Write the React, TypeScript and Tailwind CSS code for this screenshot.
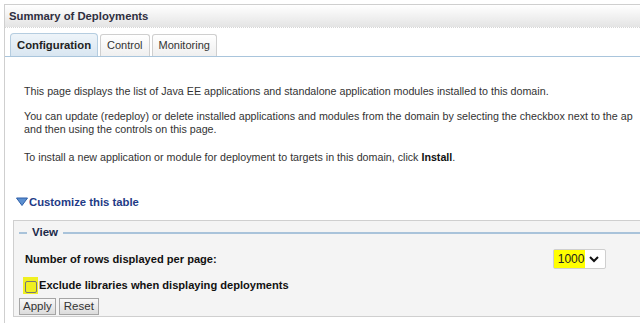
import React from 'react';

const App = () => {
  return (
    <div className="w-[640px] h-[323px] bg-white overflow-hidden font-['Liberation_Sans',sans-serif] text-[#333]">
      <div className="mt-[4px] ml-[4px] h-[319px] border-l border-t border-[#cfcfcf]">
        {/* header */}
        <div className="h-[23px] bg-gradient-to-b from-white to-[#e4e4e4] border-b border-dotted border-[#d6d6d6] flex items-center pl-[4px]">
          <span className="text-[11.3px] font-bold text-[#2f2f3f]">Summary of Deployments</span>
        </div>

        {/* tabs */}
        <div className="flex items-end gap-[2px] pl-[5px] pt-[5px] border-b border-[#a9c5dc]">
          <div className="h-[23px] px-[6px] flex items-center rounded-t-[4px] border border-b-0 border-[#b5cde0] bg-gradient-to-b from-[#eef4f9] to-[#d9e6f1] text-[11.3px] font-bold text-[#222]">
            Configuration
          </div>
          <div className="h-[22px] px-[6px] flex items-center rounded-t-[3px] border border-b-0 border-[#cfcfcf] bg-gradient-to-b from-white to-[#efefef] text-[11px] text-[#333]">
            Control
          </div>
          <div className="h-[22px] px-[6px] flex items-center rounded-t-[3px] border border-b-0 border-[#cfcfcf] bg-gradient-to-b from-white to-[#efefef] text-[11px] text-[#333]">
            Monitoring
          </div>
        </div>

        {/* description */}
        <div className="pl-[19px] pt-[28px] text-[10.7px] leading-[13px] text-[#333] whitespace-nowrap">
          <p>This page displays the list of Java EE applications and standalone application modules installed to this domain.</p>
          <p className="mt-[12px]">
            You can update (redeploy) or delete installed applications and modules from the domain by selecting the checkbox next to the ap
            <br />
            and then using the controls on this page.
          </p>
          <p className="mt-[15px]">
            To install a new application or module for deployment to targets in this domain, click <b className="text-[#111]">Install</b>.
          </p>
        </div>

        {/* customize */}
        <div className="mt-[30px] ml-[11px] flex items-center gap-[1px]">
          <svg width="12" height="10" viewBox="0 0 12 10">
            <polygon points="0.5,1 11.5,1 6,8.5" fill="#5b8fd0" stroke="#2f5fa8" strokeWidth="1" />
          </svg>
          <span className="text-[11.3px] font-bold text-[#1f3b86]">Customize this table</span>
        </div>

        {/* view box */}
        <div className="mt-[9px] ml-[8px] h-[97px] border-t border-b border-l border-[#cfcfcf] bg-[#f4f4f4] pl-[5px]">
          <div className="flex items-center mt-[4px] h-[16px]">
            <div className="w-[8px] h-[2px] bg-[#a9c3da]" />
            <span className="px-[5px] text-[11.5px] font-bold text-[#1c2a4a]">View</span>
            <div className="flex-1 h-[2px] bg-[#a9c3da]" />
          </div>

          <div className="flex items-center mt-[8px] h-[20px] pl-[6px]">
            <span className="text-[11.1px] font-bold text-[#111]">Number of rows displayed per page:</span>
            <div className="ml-[336px] h-[20px] w-[53px] border border-[#cfcfcf] rounded-[2px] bg-white flex items-center">
              <span className="bg-[#ffff00] h-full flex items-center pl-[4px] pr-[1px] text-[12px] text-[#222]">1000</span>
              <svg width="12" height="10" viewBox="0 0 12 10" className="ml-[3px]">
                <polyline points="2,3 6,7 10,3" fill="none" stroke="#111" strokeWidth="2" />
              </svg>
            </div>
          </div>

          <div className="flex items-center mt-[8px] h-[17px]">
            <div className="w-[15px] h-[17px] bg-[#f0f020] flex items-end justify-center ml-[4px] pb-[1px]">
              <div className="w-[12px] h-[12px] rounded-[2px] border border-[#777] bg-transparent" />
            </div>
            <span className="text-[11.1px] font-bold text-[#111] ml-[1px]">Exclude libraries when displaying deployments</span>
          </div>

          <div className="flex gap-[3px] mt-[4px]">
            <button className="h-[17px] px-[3px] border border-[#a5a5a5] bg-gradient-to-b from-[#f8f8f8] to-[#dcdcdc] text-[11.5px] text-[#333] leading-none">
              Apply
            </button>
            <button className="h-[17px] px-[4px] border border-[#a5a5a5] bg-gradient-to-b from-[#f8f8f8] to-[#dcdcdc] text-[11.5px] text-[#333] leading-none">
              Reset
            </button>
          </div>
        </div>
      </div>
    </div>
  );
};

export default App;
